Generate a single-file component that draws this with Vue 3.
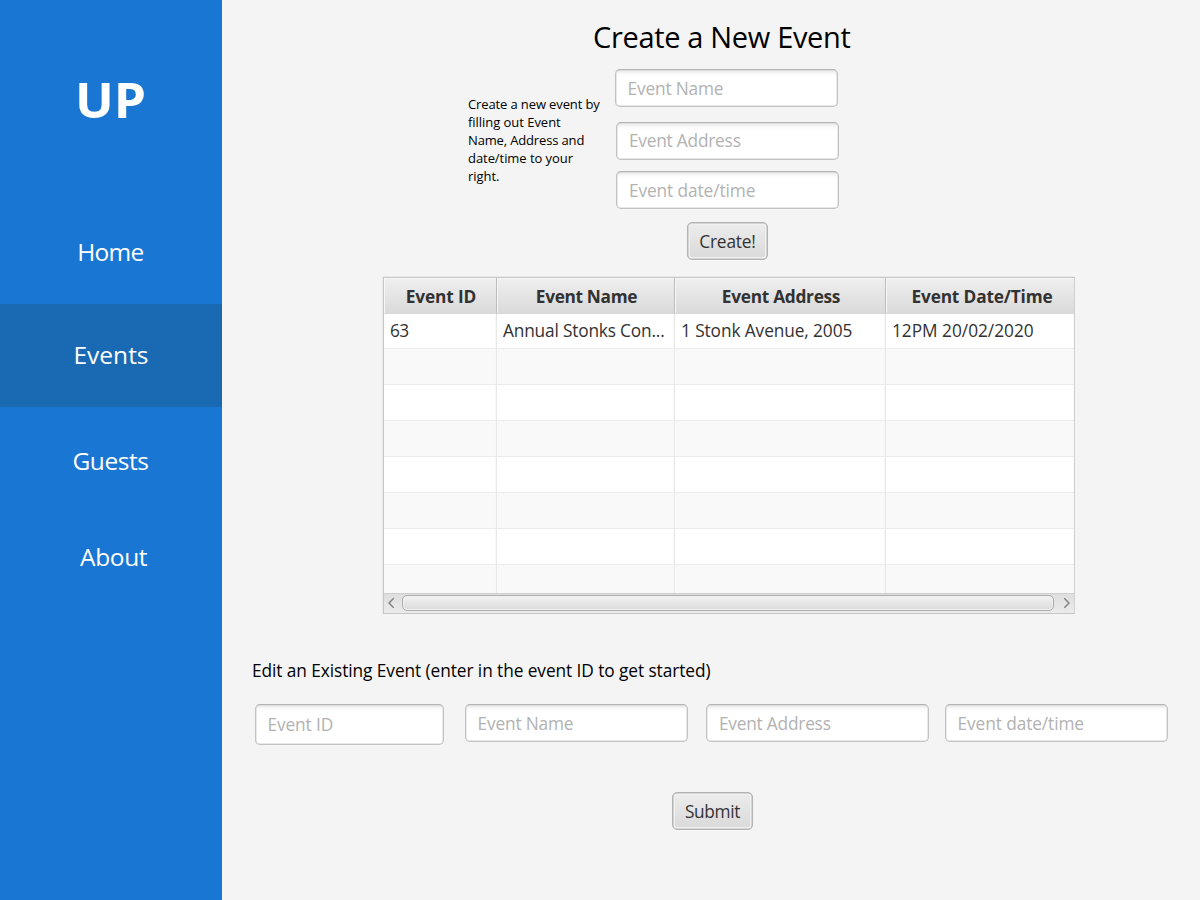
<script setup>
import { ref } from 'vue'

const nav = [
  { label: 'Home', cls: 'home' },
  { label: 'Events', cls: 'events' },
  { label: 'Guests', cls: 'guests' },
  { label: 'About', cls: 'about' },
]

const help = [
  { text: 'Create a new event by', ls: -0.12 },
  { text: 'filling out Event', ls: -0.04 },
  { text: 'Name, Address and', ls: -0.15 },
  { text: 'date/time to your', ls: -0.06 },
  { text: 'right.', ls: -0.05 },
]

const columns = [
  { label: 'Event ID', ls: -0.14 },
  { label: 'Event Name', ls: -0.34 },
  { label: 'Event Address', ls: -0.29 },
  { label: 'Event Date/Time', ls: -0.17 },
]

const cells = [
  { text: '63', ls: -0.7 },
  { text: 'Annual Stonks Con...', ls: -0.18 },
  { text: '1 Stonk Avenue, 2005', ls: -0.1 },
  { text: '12PM 20/02/2020', ls: -0.02 },
]

const emptyRows = 7
const created = ref({ name: '', address: '', time: '' })
const edited = ref({ id: '', name: '', address: '', time: '' })
</script>

<template>
  <div class="app">
    <aside class="sidebar">
      <div class="logo">UP</div>
      <nav>
        <a v-for="n in nav" :key="n.label" :class="n.cls">{{ n.label }}</a>
      </nav>
    </aside>

    <main>
      <h1>Create a New Event</h1>

      <section class="create">
        <p class="help">
          <span v-for="h in help" :key="h.text" :style="{ letterSpacing: h.ls + 'px' }">{{ h.text }}</span>
        </p>
        <div class="stack">
          <input v-model="created.name" class="f-name first" placeholder="Event Name" />
          <input v-model="created.address" class="f-addr second" placeholder="Event Address" />
          <input v-model="created.time" class="f-time third" placeholder="Event date/time" />
          <button class="create-btn">Create!</button>
        </div>
      </section>

      <section class="table">
        <div class="row head">
          <div v-for="c in columns" :key="c.label">
            <span :style="{ letterSpacing: c.ls + 'px' }">{{ c.label }}</span>
          </div>
        </div>
        <div class="body">
          <div class="row data">
            <div v-for="c in cells" :key="c.text">
              <span :style="{ letterSpacing: c.ls + 'px' }">{{ c.text }}</span>
            </div>
          </div>
          <div v-for="r in emptyRows" :key="r" class="row" :class="{ odd: r % 2 }">
            <div v-for="c in 4" :key="c"></div>
          </div>
        </div>
        <div class="scroll">
          <svg width="8" height="12" viewBox="0 0 8 12"><path d="M6.7 1.2 2 6l4.7 4.8" /></svg>
          <div class="thumb"></div>
          <svg width="8" height="12" viewBox="0 0 8 12"><path d="M1.3 1.2 6 6l-4.7 4.8" /></svg>
        </div>
      </section>

      <h2>Edit an Existing Event (enter in the event ID to get started)</h2>
      <section class="edit">
        <input v-model="edited.id" class="f-id" placeholder="Event ID" />
        <input v-model="edited.name" class="f-name" placeholder="Event Name" />
        <input v-model="edited.address" class="f-addr" placeholder="Event Address" />
        <input v-model="edited.time" class="f-time" placeholder="Event date/time" />
      </section>
      <button class="submit-btn">Submit</button>
    </main>
  </div>
</template>

<style>
body {
  margin: 0;
  background: #f4f4f4;
}
</style>

<style scoped>
.app {
  display: flex;
  width: 1200px;
  height: 900px;
  overflow: hidden;
  background: #f4f4f4;
  font-family: "Open Sans", "Noto Sans", sans-serif;
  font-size: 17.3px;
  color: #323232;
}
* {
  box-sizing: border-box;
}

/* sidebar */
.sidebar {
  width: 222px;
  flex: none;
  background: #1976d2;
  color: #fff;
}
.logo {
  width: fit-content;
  height: 68px;
  margin: 65px 0 0 75px;
  font-size: 48.5px;
  font-weight: 700;
  line-height: 68px;
  transform: scaleX(1.06);
  transform-origin: left;
}
nav {
  margin-top: 68px;
}
nav a {
  display: block;
  height: 103px;
  line-height: 101px;
  font-size: 24.5px;
}
.home {
  padding-left: 77.2px;
  letter-spacing: -0.75px;
}
.events {
  padding-left: 73.5px;
  background: #1a69b3;
}
.guests {
  margin-top: 3px;
  padding-left: 72.5px;
  letter-spacing: -0.45px;
}
.about {
  margin-top: -7px;
  padding-left: 80px;
  letter-spacing: -0.35px;
}

/* create form */
main {
  flex: 1;
}
h1 {
  margin: 16px 0 0 371px;
  height: 42px;
  line-height: 42px;
  font-size: 29px;
  font-weight: 400;
  letter-spacing: -0.33px;
  color: #000;
}
.create {
  display: flex;
  height: 192px;
  margin: 11px 0 0 246px;
}
.help {
  width: 147px;
  margin: 27.4px 0 0;
  font-size: 13px;
  line-height: 17.8px;
  color: #000;
}
.help span {
  display: block;
  white-space: nowrap;
}
.stack {
  display: flex;
  flex-direction: column;
  align-items: flex-start;
}
input {
  width: 223px;
  height: 38px;
  padding: 0 11.5px;
  border: 1px solid #c2c2c2;
  border-top-color: #b4b4b4;
  border-radius: 5px;
  outline: none;
  background: linear-gradient(#e6e6e6, #fbfbfb 4px, #fff 8px);
  box-shadow: inset 0 0 0 0.5px #d2d2d2;
  font: inherit;
  color: #323232;
}
input::placeholder {
  color: #b2b2b2;
  opacity: 1;
}
.f-id { letter-spacing: -0.12px; }
.f-name { letter-spacing: -0.16px; }
.f-addr { letter-spacing: -0.21px; }
.f-time { letter-spacing: -0.09px; }
.second {
  margin: 14.5px 0 0 1.4px;
}
.third {
  margin: 11.5px 0 0 1.4px;
}
button {
  display: block;
  width: 81px;
  height: 38px;
  padding: 0;
  border: 1px solid #b3b3b3;
  border-radius: 5px;
  background: linear-gradient(#ededed, #d9d9d9);
  box-shadow: inset 0 0 0 0.5px #b9b9b9, inset 0 0 0 2px #f0f0f0, 0 1px 0 #f9f9f9;
  font: inherit;
  color: #323232;
}
.create-btn {
  margin: 13.4px 0 0 72px;
  letter-spacing: -0.18px;
}

/* table */
.table {
  width: 692px;
  height: 337px;
  margin: 16px 0 0 161px;
  border: 1px solid #c6c6c6;
  border-right-color: #d0d0d0;
  background: #fff;
  box-shadow: -1px -1px 0 #e9e9e9;
}
.row {
  display: grid;
  grid-template-columns: 113px 178px 211px 188px;
  grid-template-rows: 100%;
  height: 36px;
}
.row > div {
  border-right: 1px solid #e8e8e8;
  border-bottom: 1px solid #ececec;
  box-shadow: inset -1px 0 0 #f8f8f8;
}
.row.head > div {
  padding-left: 2px;
  border-right-color: #bdbdbd;
  border-bottom-color: #d9d9d9;
  background: linear-gradient(#efefef, #dadada);
  box-shadow: inset 1px 1px 0 #f7f7f7;
  font-weight: 700;
  line-height: 38px;
  text-align: center;
}
.row > div:last-child {
  border-right: 0;
}
.row.head > div:last-child {
  padding-left: 4px;
}
.row.data {
  height: 35px;
}
.row.data > div {
  padding-left: 6px;
  line-height: 34px;
  white-space: nowrap;
}
.body {
  height: 279px;
  overflow: hidden;
}
.odd {
  background: #f9f9f9;
}
.scroll {
  display: flex;
  align-items: center;
  justify-content: space-between;
  height: 20px;
  padding: 0 3px 1px;
  border-top: 1px solid #cecece;
  background: linear-gradient(#dedede, #ebebeb);
}
.scroll path {
  fill: none;
  stroke: #808080;
  stroke-width: 1.4;
}
.thumb {
  width: 652px;
  height: 16px;
  margin-right: 3px;
  border: 1px solid #adadad;
  border-radius: 5px;
  background: linear-gradient(#f3f3f3, #dadada);
  box-shadow: inset 0 0 0 1px #f0f0f0;
}

/* edit form */
h2 {
  margin: 45px 0 0 30px;
  height: 24px;
  line-height: 24px;
  font-size: 17.3px;
  font-weight: 400;
  letter-spacing: -0.075px;
  color: #000;
}
.edit {
  display: grid;
  grid-template-columns: 189px 223px 223px 223px;
  column-gap: 21px;
  margin: 21px 0 0 33px;
}
.edit .f-id {
  width: 189px;
  height: 41px;
}
.edit .f-addr {
  margin-left: -2.6px;
}
.edit .f-time {
  margin-left: -8px;
}
.submit-btn {
  margin: 47.4px 0 0 450px;
  letter-spacing: -0.35px;
}
</style>
